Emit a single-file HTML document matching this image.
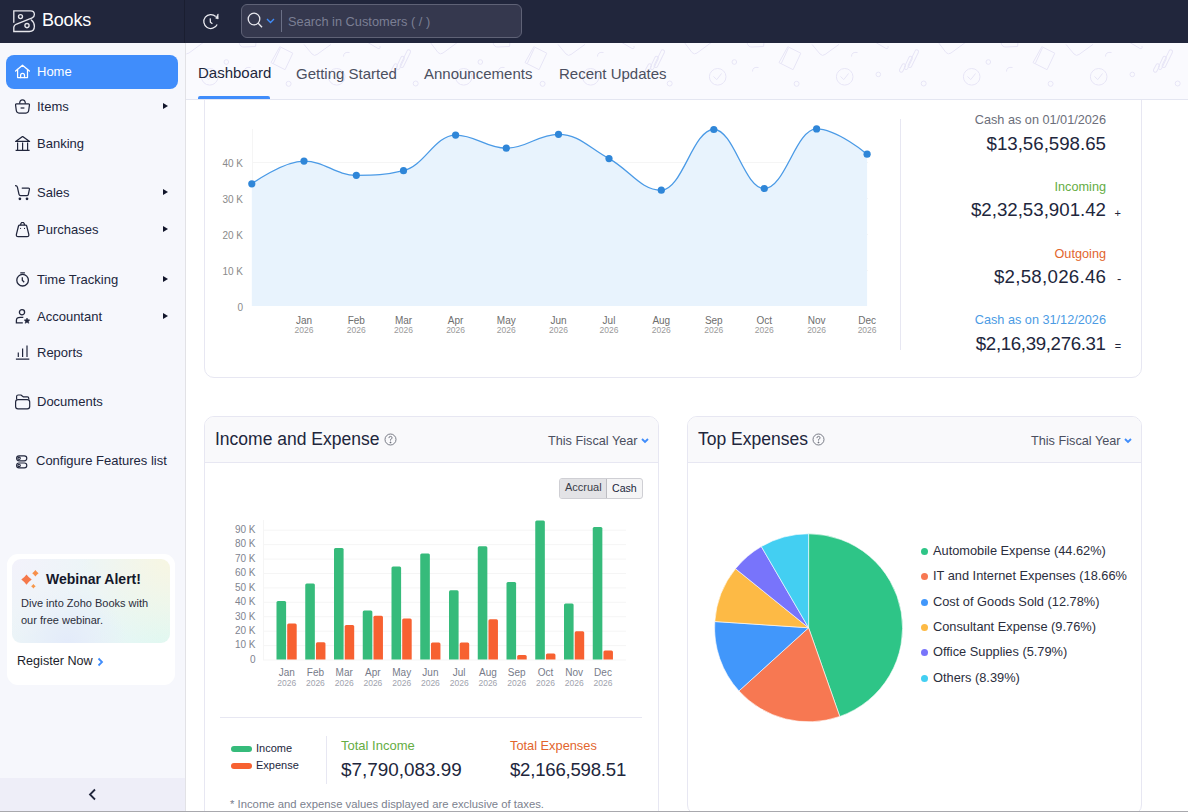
<!DOCTYPE html>
<html><head><meta charset="utf-8">
<style>
*{box-sizing:border-box;margin:0;padding:0}
html,body{width:1188px;height:812px;overflow:hidden;background:#fff;font-family:"Liberation Sans",sans-serif;color:#21263c}
.abs{position:absolute}
#top{position:absolute;left:0;top:0;width:1188px;height:43px;background:#21263c}
#logoarea{position:absolute;left:0;top:0;width:185px;height:43px;background:#21263c;border-right:1px solid #1a1e30}
#side{position:absolute;left:0;top:43px;width:186px;height:768px;background:#f6f7fc;border-right:1px solid #e2e2e6}
.nav{position:absolute;left:6px;width:172px;height:34px;font-size:13px;color:#21263c;line-height:34px}
.nav .t{position:absolute;left:31px;top:0}
.nav svg{position:absolute;left:9px;top:9px}
.nav .arr{position:absolute;left:157px;top:13.3px;width:0;height:0;border-left:5.2px solid #11152a;border-top:3.6px solid transparent;border-bottom:3.6px solid transparent}
#tabs{position:absolute;left:186px;top:43px;width:1002px;height:57px;background:#fafafe;border-bottom:1px solid #e4e6f1}
.tab{position:absolute;top:22px;font-size:15px;color:#4b4f60}
#main{position:absolute;left:186px;top:100px;width:1002px;height:710px;background:#fff}
.card{position:absolute;border:1px solid #e7e7f2;border-radius:8px;background:#fff;overflow:hidden}
.chead{position:absolute;left:0;top:0;right:0;height:46px;background:#f9f9fb;border-bottom:1px solid #e7e7f2}
.rt{right:82px;font-size:12.7px;white-space:nowrap}
.rv{right:82px;font-size:18.7px;color:#21263c;white-space:nowrap}
.ctitle{font-size:17.5px;color:#21263c;white-space:nowrap}
.fy{font-size:12.7px;color:#4b4f60;white-space:nowrap;margin-top:1px}
.leg{position:absolute;left:18px;font-size:12.8px;color:#2b2e3d;white-space:nowrap;height:20px;line-height:20px}
.leg i{position:absolute;left:-12px;top:7px;width:7px;height:7px;border-radius:50%}
</style></head>
<body>
<div id="top">
  <div id="logoarea">
    <svg class="abs" style="left:13px;top:10px" width="23" height="23" viewBox="0 0 23 23" fill="none" stroke="#e6e6ec" stroke-width="1.35" stroke-linecap="round"><path d="M0.8 12.3 V0.8 H17.5 Q21.4 0.8 21.4 4.6 Q21.4 6.9 19.2 7.8 L3.6 14 Q0.8 15.2 0.8 17.6 V21.5 H16.3 Q21.4 21.5 21.4 16.2 Q21.4 12.3 18.3 10"/><circle cx="7.5" cy="6.6" r="2"/><circle cx="14" cy="15.6" r="2.1"/></svg>
    <div class="abs" style="left:42px;top:10px;font-size:18px;color:#fff;font-weight:normal;letter-spacing:-0.2px">Books</div>
  </div>
  <svg class="abs" style="left:198px;top:8px" width="26" height="26" viewBox="0 0 26 26" fill="none" stroke="#ececf2" stroke-width="1.25"><path d="M17.75 8.55 A7 7 0 1 0 19.15 16.46"/><path d="M17.6 10.2 L20.1 5.9 L20.2 10.9 Z" fill="#ececf2" stroke-width="0.6" stroke-linejoin="round"/><path d="M12.2 10.4 L12.4 14.2 L14.4 15.8"/></svg>
  <div class="abs" style="left:241px;top:4px;width:281px;height:34px;background:#35384e;border:1px solid #5f6276;border-radius:6px"></div>
  <svg class="abs" style="left:247px;top:12px" width="16" height="17" viewBox="0 0 16 17" fill="none" stroke="#e8e8ee" stroke-width="1.3"><circle cx="7" cy="7" r="5.8"/><path d="M11.2 11.2 L15 15.3"/></svg>
  <svg class="abs" style="left:266px;top:18px" width="9" height="6" viewBox="0 0 9 6" fill="none" stroke="#408dfb" stroke-width="1.4"><path d="M1 1 L4.5 4.5 L8 1"/></svg>
  <div class="abs" style="left:281px;top:10px;width:1px;height:22px;background:#6b7086"></div>
  <div class="abs" style="left:288px;top:13.5px;font-size:12.8px;color:#7b7f94;white-space:nowrap">Search in Customers ( / )</div>
</div>
<div id="side">
  <div class="nav" style="top:12px;background:#408dfb;border-radius:8px;color:#fff">
    <svg width="16" height="16" viewBox="0 0 16 16" fill="none" stroke="#fff" stroke-width="1.25" stroke-linejoin="round" stroke-linecap="round"><path d="M0.6 7 L7.5 1.2 L14.4 7"/><path d="M2.6 5.4 V13.6 H12.5 V5.4"/><path d="M5.6 13.6 V11.4 Q5.6 9.4 7.55 9.4 Q9.5 9.4 9.5 11.4 V13.6"/></svg>
    <span class="t">Home</span>
  </div>
  <div class="nav" style="top:47px">
    <svg width="16" height="16" viewBox="0 0 16 16" fill="none" stroke="#21263c" stroke-width="1.25" stroke-linejoin="round"><path d="M4.6 4.6 Q4.8 0.9 7.5 0.9 Q10.2 0.9 10.4 4.6"/><path d="M1.6 4.8 H13.4 Q14.6 4.8 14.4 6.3 L13.7 11.5 Q13.3 14 11 14 H4 Q1.7 14 1.3 11.5 L0.6 6.3 Q0.4 4.8 1.6 4.8 Z"/><path d="M5.6 9 H9.4"/></svg>
    <span class="t">Items</span><span class="arr"></span>
  </div>
  <div class="nav" style="top:84px">
    <svg width="16" height="16" viewBox="0 0 16 16" fill="none" stroke="#21263c" stroke-width="1.2" stroke-linejoin="round"><path d="M0.6 5.4 L7.6 0.4 L14.6 5.4 Z"/><path d="M2.6 6.4 V13.8 M7.6 6.4 V13.8 M12.6 6.4 V13.8 M0.6 14.3 H14.6"/></svg>
    <span class="t">Banking</span>
  </div>
  <div class="nav" style="top:133px">
    <svg width="16" height="16" viewBox="0 0 16 16" fill="none" stroke="#21263c" stroke-width="1.25" stroke-linejoin="round" stroke-linecap="round"><path d="M0.4 0.7 Q2 0.7 2.4 2.2 L4 9.3 Q4.3 10.6 5.6 10.6 H12.2 Q13.1 10.6 13.3 9.7 L14.4 4.4 Q14.6 3.1 13.3 3.1 H7.2"/><circle cx="4.9" cy="13.8" r="0.75" fill="#21263c"/><circle cx="12" cy="13.8" r="0.75" fill="#21263c"/></svg>
    <span class="t">Sales</span><span class="arr"></span>
  </div>
  <div class="nav" style="top:170px">
    <svg width="16" height="16" viewBox="0 0 16 16" fill="none" stroke="#21263c" stroke-width="1.25" stroke-linejoin="round"><path d="M5.6 3.2 Q5.6 0.4 7.55 0.4 Q9.5 0.4 9.5 3.2"/><path d="M4.6 3.2 H10.6 Q11.4 3.2 11.7 4 L13.8 12.3 Q14.2 14.6 12 14.6 H3.2 Q1 14.6 1.4 12.3 L3.5 4 Q3.8 3.2 4.6 3.2 Z"/><circle cx="5.6" cy="6.4" r="0.55" fill="#21263c" stroke="none"/><circle cx="9.5" cy="6.4" r="0.55" fill="#21263c" stroke="none"/></svg>
    <span class="t">Purchases</span><span class="arr"></span>
  </div>
  <div class="nav" style="top:220px">
    <svg width="16" height="16" viewBox="0 0 16 16" fill="none" stroke="#21263c" stroke-width="1.3"><circle cx="7.6" cy="8.2" r="5.8"/><path d="M5.3 0.9 H9.9 M7.3 5.3 V8.3 L9.2 10.2"/></svg>
    <span class="t">Time Tracking</span><span class="arr"></span>
  </div>
  <div class="nav" style="top:257px">
    <svg width="16" height="16" viewBox="0 0 16 16" fill="none" stroke="#21263c" stroke-width="1.3"><circle cx="7" cy="3.3" r="2.6"/><path d="M8.3 8.3 H5.3 Q1.4 8.3 1.4 11.5 V13.8 H7.8"/><path d="M12 9 L12.9 10.8 L14.8 11 L13.4 12.3 L13.8 14.3 L12 13.3 L10.2 14.3 L10.6 12.3 L9.2 11 L11.1 10.8 Z" fill="#21263c" stroke-width="0.6"/></svg>
    <span class="t">Accountant</span><span class="arr"></span>
  </div>
  <div class="nav" style="top:293px">
    <svg width="16" height="16" viewBox="0 0 16 16" fill="none" stroke="#21263c" stroke-width="1.3"><path d="M0.9 14.1 H14.3 M3.3 7.6 V11.9 M7.6 3.5 V11.9 M12 0.4 V11.9" stroke-width="1.2"/></svg>
    <span class="t">Reports</span>
  </div>
  <div class="nav" style="top:342px">
    <svg width="16" height="16" viewBox="0 0 16 16" fill="none" stroke="#21263c" stroke-width="1.2" stroke-linejoin="round"><path d="M1.6 5.6 V2.6 Q1.6 1 3.2 1 H5.9 L8.2 2.8 H12.3 Q13.8 2.8 13.8 4.4 V5.6"/><rect x="0.6" y="5.6" width="14.1" height="9.2" rx="2.4"/></svg>
    <span class="t">Documents</span>
  </div>
  <div class="nav" style="top:401px">
    <svg width="16" height="16" viewBox="0 0 16 16" fill="none" stroke="#21263c" stroke-width="1.15"><rect x="1.6" y="2.8" width="10.2" height="5" rx="2.5"/><rect x="1.6" y="10" width="10.2" height="4.8" rx="2.4"/><circle cx="4.1" cy="5.3" r="1.2"/><circle cx="4.1" cy="12.4" r="1.2"/></svg>
    <span class="t" style="left:30px">Configure Features list</span>
  </div>
  <div class="abs" style="left:7px;top:511px;width:168px;height:131px;background:#fff;border-radius:11px">
    <div class="abs" style="left:5px;top:5px;width:158px;height:84px;border-radius:9px;background:radial-gradient(circle at 0% 0%,#f3f2fb 0,rgba(243,242,251,0) 45%),radial-gradient(circle at 100% 0%,#f7f6e2 0,rgba(247,246,226,0) 50%),radial-gradient(circle at 35% 100%,#e3ebfa 0,rgba(227,235,250,0) 45%),radial-gradient(circle at 95% 95%,#e0f8f2 0,rgba(224,248,242,0) 45%),#ecf5f7"></div>
    <svg class="abs" style="left:0;top:0" width="40" height="40" viewBox="0 0 40 40"><path d="M19.5 20.400000000000002 Q21.684 23.416 24.7 25.6 Q21.684 27.784000000000002 19.5 30.8 Q17.316 27.784000000000002 14.3 25.6 Q17.316 23.416 19.5 20.400000000000002Z" fill="#f5784a"/><path d="M28.4 16.0 Q29.744 17.855999999999998 31.599999999999998 19.2 Q29.744 20.544 28.4 22.4 Q27.055999999999997 20.544 25.2 19.2 Q27.055999999999997 17.855999999999998 28.4 16.0Z" fill="#f78f4a"/><path d="M26.4 29.999999999999996 Q27.366 31.333999999999996 28.7 32.3 Q27.366 33.266 26.4 34.599999999999994 Q25.433999999999997 33.266 24.099999999999998 32.3 Q25.433999999999997 31.333999999999996 26.4 29.999999999999996Z" fill="#f7974a"/></svg>
    <div class="abs" style="left:39px;top:17px;font-size:14px;font-weight:bold;color:#15182a;white-space:nowrap">Webinar Alert!</div>
    <div class="abs" style="left:14px;top:41px;font-size:11px;line-height:17px;color:#2a2d3a;white-space:nowrap">Dive into Zoho Books with<br>our free webinar.</div>
    <div class="abs" style="left:10px;top:99.5px;font-size:12.6px;color:#1a1d2b;white-space:nowrap">Register Now</div>
    <svg class="abs" style="left:90px;top:103px" width="7" height="10" viewBox="0 0 7 10" fill="none" stroke="#408dfb" stroke-width="1.8"><path d="M1.5 1.5 L5 5 L1.5 8.5"/></svg>
  </div>
  <div class="abs" style="left:0;top:735px;width:185px;height:33px;background:#eeeef8"></div>
  <svg class="abs" style="left:88px;top:745px" width="9" height="13" viewBox="0 0 9 13" fill="none" stroke="#21263c" stroke-width="1.8"><path d="M7 1.5 L2 6.5 L7 11.5"/></svg>
</div>
<div id="tabs"><svg class="abs" style="left:0;top:0" width="1002" height="56"><defs><pattern id="doodle" x="6" y="-1" width="254" height="57" patternUnits="userSpaceOnUse"><g fill="none" stroke="#e7e5f6" stroke-width="1">
<circle cx="17.7" cy="34.8" r="8.3"/><path d="M13.5 34.5 L16.8 37.6 L21.5 31.5"/>
<circle cx="144.7" cy="34.8" r="8.3"/><path d="M140.5 34.5 L143.8 37.6 L148.5 31.5"/>
<circle cx="34.3" cy="20" r="2.3"/><path d="M52.5 29.5 Q52.5 24.5 58.5 25.5"/>
<path d="M87.8 4.7 L100.8 11.2 L93.1 27.7 L79 20.6 Z M88.4 6 L81.3 21.5"/>
<circle cx="96.6" cy="41.8" r="2.5"/>
<path d="M112 2.4 L120 12 Q122.5 14.5 125 12.5 L139 2.4"/>
<path d="M151.5 14.5 Q151.5 9.5 157.5 10.5"/>
<circle cx="178.3" cy="32.4" r="2.3"/>
<rect x="-1.8" y="-4.5" width="3.6" height="9" rx="1.8" transform="translate(202.5 26) rotate(28)"/>
<rect x="-1.8" y="-7" width="3.6" height="14" rx="1.8" transform="translate(208.3 20.9) rotate(25)"/>
<rect x="-1.8" y="-9.6" width="3.6" height="19.2" rx="1.8" transform="translate(213.3 16.7) rotate(26)"/>
<circle cx="223.7" cy="41.5" r="2.5"/>
<path d="M238 0 L246 10.5 Q248.5 13 251 11 L266 0"/><path d="M-16 0 L-8 10.5 Q-5.5 13 -3 11 L12 0"/>
<path d="M47 0.5 Q48 5.3 52 5 L63.6 4.5 L64 0"/>
<path d="M175 0 L186 6.5 Q188.5 7.5 188 4"/>
</g></pattern></defs><rect width="1002" height="56" fill="url(#doodle)"/></svg>

  <div class="tab" style="left:12px;top:21px;color:#21263c">Dashboard</div>
  <div class="tab" style="left:110px">Getting Started</div>
  <div class="tab" style="left:238px">Announcements</div>
  <div class="tab" style="left:373px">Recent Updates</div>
  <div class="abs" style="left:12px;top:53px;width:72px;height:3px;background:#408dfb;border-radius:2px 2px 0 0"></div>
</div>
<div id="main"></div>
<div class="abs" style="left:186px;top:100px;width:1002px;height:712px;overflow:hidden">
  <div class="abs" style="left:18px;top:-40px;width:938px;height:318px;border:1px solid #e7e7f2;border-radius:10px;background:#fff"></div>
  <div class="abs" style="left:714px;top:19px;width:1px;height:231px;background:#e7e7f2"></div>
  <div class="abs" style="left:18px;top:316px;width:455px;height:420px;border:1px solid #e7e7f2;border-radius:10px;background:#fff;overflow:hidden">
    <div class="chead"></div>
  </div>
  <div class="abs" style="left:501px;top:316px;width:455px;height:399px;border:1px solid #e7e7f2;border-radius:10px;background:#fff;overflow:hidden">
    <div class="chead"></div>
  </div>
</div>
<svg class="abs" style="left:0;top:0" width="1188" height="812" viewBox="0 0 1188 812">
<line x1="252" y1="162.5" x2="868" y2="162.5" stroke="#f5f5f5" stroke-width="1"/>
<line x1="252" y1="198.5" x2="868" y2="198.5" stroke="#f5f5f5" stroke-width="1"/>
<line x1="252" y1="234.5" x2="868" y2="234.5" stroke="#f5f5f5" stroke-width="1"/>
<line x1="252" y1="270.5" x2="868" y2="270.5" stroke="#f5f5f5" stroke-width="1"/>
<line x1="252.5" y1="129" x2="252.5" y2="306" stroke="#f5f5f5" stroke-width="1"/>
<path d="M251.80 183.80 C251.80 183.80 283.12 161.10 304.00 161.10 C324.92 161.10 335.38 175.30 356.30 175.30 C375.18 175.30 384.62 175.30 403.50 170.70 C424.34 166.10 434.76 135.10 455.60 135.10 C475.88 135.10 486.02 148.20 506.30 148.20 C527.18 148.20 537.62 134.30 558.50 134.30 C578.70 134.30 588.80 147.62 609.00 158.60 C629.92 169.98 640.38 190.20 661.30 190.20 C682.30 190.20 692.80 129.50 713.80 129.50 C734.00 129.50 744.10 188.50 764.30 188.50 C785.22 188.50 795.68 128.90 816.60 128.90 C836.80 128.90 867.10 154.20 867.10 154.20 L867.10 306 L251.80 306 Z" fill="#e8f3fd"/>
<path d="M251.80 183.80 C251.80 183.80 283.12 161.10 304.00 161.10 C324.92 161.10 335.38 175.30 356.30 175.30 C375.18 175.30 384.62 175.30 403.50 170.70 C424.34 166.10 434.76 135.10 455.60 135.10 C475.88 135.10 486.02 148.20 506.30 148.20 C527.18 148.20 537.62 134.30 558.50 134.30 C578.70 134.30 588.80 147.62 609.00 158.60 C629.92 169.98 640.38 190.20 661.30 190.20 C682.30 190.20 692.80 129.50 713.80 129.50 C734.00 129.50 744.10 188.50 764.30 188.50 C785.22 188.50 795.68 128.90 816.60 128.90 C836.80 128.90 867.10 154.20 867.10 154.20" fill="none" stroke="#4a9ae6" stroke-width="1.3"/>
<circle cx="251.8" cy="183.8" r="3.6" fill="#2f86d8"/>
<circle cx="304.0" cy="161.1" r="3.6" fill="#2f86d8"/>
<circle cx="356.3" cy="175.3" r="3.6" fill="#2f86d8"/>
<circle cx="403.5" cy="170.7" r="3.6" fill="#2f86d8"/>
<circle cx="455.6" cy="135.1" r="3.6" fill="#2f86d8"/>
<circle cx="506.3" cy="148.2" r="3.6" fill="#2f86d8"/>
<circle cx="558.5" cy="134.3" r="3.6" fill="#2f86d8"/>
<circle cx="609.0" cy="158.6" r="3.6" fill="#2f86d8"/>
<circle cx="661.3" cy="190.2" r="3.6" fill="#2f86d8"/>
<circle cx="713.8" cy="129.5" r="3.6" fill="#2f86d8"/>
<circle cx="764.3" cy="188.5" r="3.6" fill="#2f86d8"/>
<circle cx="816.6" cy="128.9" r="3.6" fill="#2f86d8"/>
<circle cx="867.1" cy="154.2" r="3.6" fill="#2f86d8"/>
<text x="243" y="166.6" text-anchor="end" font-size="10" fill="#8a8a8a">40 K</text>
<text x="243" y="202.6" text-anchor="end" font-size="10" fill="#8a8a8a">30 K</text>
<text x="243" y="238.6" text-anchor="end" font-size="10" fill="#8a8a8a">20 K</text>
<text x="243" y="274.6" text-anchor="end" font-size="10" fill="#8a8a8a">10 K</text>
<text x="243" y="310.6" text-anchor="end" font-size="10" fill="#8a8a8a">0</text>
<text x="304.0" y="323.5" text-anchor="middle" font-size="10" fill="#6e6e6e">Jan</text>
<text x="304.0" y="333" text-anchor="middle" font-size="8.5" fill="#9a9a9a">2026</text>
<text x="356.3" y="323.5" text-anchor="middle" font-size="10" fill="#6e6e6e">Feb</text>
<text x="356.3" y="333" text-anchor="middle" font-size="8.5" fill="#9a9a9a">2026</text>
<text x="403.5" y="323.5" text-anchor="middle" font-size="10" fill="#6e6e6e">Mar</text>
<text x="403.5" y="333" text-anchor="middle" font-size="8.5" fill="#9a9a9a">2026</text>
<text x="455.6" y="323.5" text-anchor="middle" font-size="10" fill="#6e6e6e">Apr</text>
<text x="455.6" y="333" text-anchor="middle" font-size="8.5" fill="#9a9a9a">2026</text>
<text x="506.3" y="323.5" text-anchor="middle" font-size="10" fill="#6e6e6e">May</text>
<text x="506.3" y="333" text-anchor="middle" font-size="8.5" fill="#9a9a9a">2026</text>
<text x="558.5" y="323.5" text-anchor="middle" font-size="10" fill="#6e6e6e">Jun</text>
<text x="558.5" y="333" text-anchor="middle" font-size="8.5" fill="#9a9a9a">2026</text>
<text x="609.0" y="323.5" text-anchor="middle" font-size="10" fill="#6e6e6e">Jul</text>
<text x="609.0" y="333" text-anchor="middle" font-size="8.5" fill="#9a9a9a">2026</text>
<text x="661.3" y="323.5" text-anchor="middle" font-size="10" fill="#6e6e6e">Aug</text>
<text x="661.3" y="333" text-anchor="middle" font-size="8.5" fill="#9a9a9a">2026</text>
<text x="713.8" y="323.5" text-anchor="middle" font-size="10" fill="#6e6e6e">Sep</text>
<text x="713.8" y="333" text-anchor="middle" font-size="8.5" fill="#9a9a9a">2026</text>
<text x="764.3" y="323.5" text-anchor="middle" font-size="10" fill="#6e6e6e">Oct</text>
<text x="764.3" y="333" text-anchor="middle" font-size="8.5" fill="#9a9a9a">2026</text>
<text x="816.6" y="323.5" text-anchor="middle" font-size="10" fill="#6e6e6e">Nov</text>
<text x="816.6" y="333" text-anchor="middle" font-size="8.5" fill="#9a9a9a">2026</text>
<text x="867.1" y="323.5" text-anchor="middle" font-size="10" fill="#6e6e6e">Dec</text>
<text x="867.1" y="333" text-anchor="middle" font-size="8.5" fill="#9a9a9a">2026</text>
<line x1="263" y1="660.0" x2="626" y2="660.0" stroke="#f5f5f5" stroke-width="1"/>
<text x="255.5" y="662.8" text-anchor="end" font-size="10" fill="#80848f">0</text>
<line x1="263" y1="645.6" x2="626" y2="645.6" stroke="#f5f5f5" stroke-width="1"/>
<text x="255.5" y="648.4" text-anchor="end" font-size="10" fill="#80848f">10 K</text>
<line x1="263" y1="631.2" x2="626" y2="631.2" stroke="#f5f5f5" stroke-width="1"/>
<text x="255.5" y="634.0" text-anchor="end" font-size="10" fill="#80848f">20 K</text>
<line x1="263" y1="616.7" x2="626" y2="616.7" stroke="#f5f5f5" stroke-width="1"/>
<text x="255.5" y="619.5" text-anchor="end" font-size="10" fill="#80848f">30 K</text>
<line x1="263" y1="602.3" x2="626" y2="602.3" stroke="#f5f5f5" stroke-width="1"/>
<text x="255.5" y="605.1" text-anchor="end" font-size="10" fill="#80848f">40 K</text>
<line x1="263" y1="587.9" x2="626" y2="587.9" stroke="#f5f5f5" stroke-width="1"/>
<text x="255.5" y="590.7" text-anchor="end" font-size="10" fill="#80848f">50 K</text>
<line x1="263" y1="573.5" x2="626" y2="573.5" stroke="#f5f5f5" stroke-width="1"/>
<text x="255.5" y="576.3" text-anchor="end" font-size="10" fill="#80848f">60 K</text>
<line x1="263" y1="559.1" x2="626" y2="559.1" stroke="#f5f5f5" stroke-width="1"/>
<text x="255.5" y="561.9" text-anchor="end" font-size="10" fill="#80848f">70 K</text>
<line x1="263" y1="544.6" x2="626" y2="544.6" stroke="#f5f5f5" stroke-width="1"/>
<text x="255.5" y="547.4" text-anchor="end" font-size="10" fill="#80848f">80 K</text>
<line x1="263" y1="530.2" x2="626" y2="530.2" stroke="#f5f5f5" stroke-width="1"/>
<text x="255.5" y="533.0" text-anchor="end" font-size="10" fill="#80848f">90 K</text>
<line x1="263.5" y1="520" x2="263.5" y2="660" stroke="#f5f5f5" stroke-width="1"/>
<path d="M276.50 659.5 V602.40 Q276.50 600.90 278.00 600.90 H284.60 Q286.10 600.90 286.10 602.40 V659.5 Z" fill="#36bb7b"/>
<path d="M287.20 659.5 V625.00 Q287.20 623.50 288.70 623.50 H295.20 Q296.70 623.50 296.70 625.00 V659.5 Z" fill="#f76131"/>
<text x="286.7" y="676" text-anchor="middle" font-size="10" fill="#777b89">Jan</text>
<text x="286.7" y="685.7" text-anchor="middle" font-size="8.5" fill="#a0a3ae">2026</text>
<path d="M305.25 659.5 V585.10 Q305.25 583.60 306.75 583.60 H313.35 Q314.85 583.60 314.85 585.10 V659.5 Z" fill="#36bb7b"/>
<path d="M315.95 659.5 V643.70 Q315.95 642.20 317.45 642.20 H323.95 Q325.45 642.20 325.45 643.70 V659.5 Z" fill="#f76131"/>
<text x="315.4" y="676" text-anchor="middle" font-size="10" fill="#777b89">Feb</text>
<text x="315.4" y="685.7" text-anchor="middle" font-size="8.5" fill="#a0a3ae">2026</text>
<path d="M334.00 659.5 V549.60 Q334.00 548.10 335.50 548.10 H342.10 Q343.60 548.10 343.60 549.60 V659.5 Z" fill="#36bb7b"/>
<path d="M344.70 659.5 V626.40 Q344.70 624.90 346.20 624.90 H352.70 Q354.20 624.90 354.20 626.40 V659.5 Z" fill="#f76131"/>
<text x="344.2" y="676" text-anchor="middle" font-size="10" fill="#777b89">Mar</text>
<text x="344.2" y="685.7" text-anchor="middle" font-size="8.5" fill="#a0a3ae">2026</text>
<path d="M362.75 659.5 V611.90 Q362.75 610.40 364.25 610.40 H370.85 Q372.35 610.40 372.35 611.90 V659.5 Z" fill="#36bb7b"/>
<path d="M373.45 659.5 V617.30 Q373.45 615.80 374.95 615.80 H381.45 Q382.95 615.80 382.95 617.30 V659.5 Z" fill="#f76131"/>
<text x="372.9" y="676" text-anchor="middle" font-size="10" fill="#777b89">Apr</text>
<text x="372.9" y="685.7" text-anchor="middle" font-size="8.5" fill="#a0a3ae">2026</text>
<path d="M391.50 659.5 V568.00 Q391.50 566.50 393.00 566.50 H399.60 Q401.10 566.50 401.10 568.00 V659.5 Z" fill="#36bb7b"/>
<path d="M402.20 659.5 V619.90 Q402.20 618.40 403.70 618.40 H410.20 Q411.70 618.40 411.70 619.90 V659.5 Z" fill="#f76131"/>
<text x="401.7" y="676" text-anchor="middle" font-size="10" fill="#777b89">May</text>
<text x="401.7" y="685.7" text-anchor="middle" font-size="8.5" fill="#a0a3ae">2026</text>
<path d="M420.25 659.5 V555.00 Q420.25 553.50 421.75 553.50 H428.35 Q429.85 553.50 429.85 555.00 V659.5 Z" fill="#36bb7b"/>
<path d="M430.95 659.5 V644.10 Q430.95 642.60 432.45 642.60 H438.95 Q440.45 642.60 440.45 644.10 V659.5 Z" fill="#f76131"/>
<text x="430.4" y="676" text-anchor="middle" font-size="10" fill="#777b89">Jun</text>
<text x="430.4" y="685.7" text-anchor="middle" font-size="8.5" fill="#a0a3ae">2026</text>
<path d="M449.00 659.5 V591.80 Q449.00 590.30 450.50 590.30 H457.10 Q458.60 590.30 458.60 591.80 V659.5 Z" fill="#36bb7b"/>
<path d="M459.70 659.5 V644.00 Q459.70 642.50 461.20 642.50 H467.70 Q469.20 642.50 469.20 644.00 V659.5 Z" fill="#f76131"/>
<text x="459.2" y="676" text-anchor="middle" font-size="10" fill="#777b89">Jul</text>
<text x="459.2" y="685.7" text-anchor="middle" font-size="8.5" fill="#a0a3ae">2026</text>
<path d="M477.75 659.5 V547.80 Q477.75 546.30 479.25 546.30 H485.85 Q487.35 546.30 487.35 547.80 V659.5 Z" fill="#36bb7b"/>
<path d="M488.45 659.5 V620.80 Q488.45 619.30 489.95 619.30 H496.45 Q497.95 619.30 497.95 620.80 V659.5 Z" fill="#f76131"/>
<text x="487.9" y="676" text-anchor="middle" font-size="10" fill="#777b89">Aug</text>
<text x="487.9" y="685.7" text-anchor="middle" font-size="8.5" fill="#a0a3ae">2026</text>
<path d="M506.50 659.5 V583.60 Q506.50 582.10 508.00 582.10 H514.60 Q516.10 582.10 516.10 583.60 V659.5 Z" fill="#36bb7b"/>
<path d="M517.20 659.5 V656.40 Q517.20 654.90 518.70 654.90 H525.20 Q526.70 654.90 526.70 656.40 V659.5 Z" fill="#f76131"/>
<text x="516.7" y="676" text-anchor="middle" font-size="10" fill="#777b89">Sep</text>
<text x="516.7" y="685.7" text-anchor="middle" font-size="8.5" fill="#a0a3ae">2026</text>
<path d="M535.25 659.5 V522.10 Q535.25 520.60 536.75 520.60 H543.35 Q544.85 520.60 544.85 522.10 V659.5 Z" fill="#36bb7b"/>
<path d="M545.95 659.5 V655.00 Q545.95 653.50 547.45 653.50 H553.95 Q555.45 653.50 555.45 655.00 V659.5 Z" fill="#f76131"/>
<text x="545.5" y="676" text-anchor="middle" font-size="10" fill="#777b89">Oct</text>
<text x="545.5" y="685.7" text-anchor="middle" font-size="8.5" fill="#a0a3ae">2026</text>
<path d="M564.00 659.5 V605.10 Q564.00 603.60 565.50 603.60 H572.10 Q573.60 603.60 573.60 605.10 V659.5 Z" fill="#36bb7b"/>
<path d="M574.70 659.5 V632.80 Q574.70 631.30 576.20 631.30 H582.70 Q584.20 631.30 584.20 632.80 V659.5 Z" fill="#f76131"/>
<text x="574.2" y="676" text-anchor="middle" font-size="10" fill="#777b89">Nov</text>
<text x="574.2" y="685.7" text-anchor="middle" font-size="8.5" fill="#a0a3ae">2026</text>
<path d="M592.75 659.5 V528.40 Q592.75 526.90 594.25 526.90 H600.85 Q602.35 526.90 602.35 528.40 V659.5 Z" fill="#36bb7b"/>
<path d="M603.45 659.5 V651.90 Q603.45 650.40 604.95 650.40 H611.45 Q612.95 650.40 612.95 651.90 V659.5 Z" fill="#f76131"/>
<text x="603.0" y="676" text-anchor="middle" font-size="10" fill="#777b89">Dec</text>
<text x="603.0" y="685.7" text-anchor="middle" font-size="8.5" fill="#a0a3ae">2026</text>
<path d="M808.6 627.8 L808.60 533.80 A94 94 0 0 1 839.77 716.48 Z" fill="#2ec587" stroke="#fff" stroke-width="0.6" stroke-linejoin="round"/>
<path d="M808.6 627.8 L839.77 716.48 A94 94 0 0 1 738.96 690.93 Z" fill="#f77852" stroke="#fff" stroke-width="0.6" stroke-linejoin="round"/>
<path d="M808.6 627.8 L738.96 690.93 A94 94 0 0 1 714.81 621.54 Z" fill="#4197fb" stroke="#fff" stroke-width="0.6" stroke-linejoin="round"/>
<path d="M808.6 627.8 L714.81 621.54 A94 94 0 0 1 735.50 568.71 Z" fill="#fdba45" stroke="#fff" stroke-width="0.6" stroke-linejoin="round"/>
<path d="M808.6 627.8 L735.50 568.71 A94 94 0 0 1 761.31 546.56 Z" fill="#7874fb" stroke="#fff" stroke-width="0.6" stroke-linejoin="round"/>
<path d="M808.6 627.8 L761.31 546.56 A94 94 0 0 1 808.60 533.80 Z" fill="#43cff2" stroke="#fff" stroke-width="0.6" stroke-linejoin="round"/>
</svg>
<div class="abs rt" style="top:113px;color:#6b6e7a">Cash as on 01/01/2026</div>
<div class="abs rv" style="top:132.7px">$13,56,598.65</div>
<div class="abs rt" style="top:180px;color:#65ad43">Incoming</div>
<div class="abs rv" style="top:199px">$2,32,53,901.42</div>
<div class="abs" style="left:1114.5px;top:206.5px;font-size:11px;color:#21263c">+</div>
<div class="abs rt" style="top:247px;color:#e2652d">Outgoing</div>
<div class="abs rv" style="top:265.5px;letter-spacing:0.27px;margin-right:-0.27px">$2,58,026.46</div>
<div class="abs" style="left:1117px;top:270.5px;font-size:13px;color:#21263c">-</div>
<div class="abs rt" style="top:313px;color:#4b9be4">Cash as on 31/12/2026</div>
<div class="abs rv" style="top:333px;letter-spacing:-0.35px;margin-right:0.35px">$2,16,39,276.31</div>
<div class="abs" style="left:1114.7px;top:339.5px;font-size:11px;color:#21263c">=</div>

<div class="abs ctitle" style="left:215px;top:429px">Income and Expense</div>
<svg class="abs" style="left:384px;top:433px" width="13" height="13" viewBox="0 0 13 13" fill="none" stroke="#6a6d78" stroke-width="0.9"><circle cx="6.5" cy="6.5" r="5.5"/><path d="M4.9 5.1 Q4.9 3.4 6.5 3.4 Q8.1 3.4 8.1 4.9 Q8.1 5.9 6.5 6.5 V7.6"/><circle cx="6.5" cy="9.4" r="0.5" fill="#6a6d78"/></svg>
<div class="abs fy" style="left:548px;top:433px">This Fiscal Year</div>
<svg class="abs" style="left:640.5px;top:437.5px" width="9" height="6" viewBox="0 0 9 6" fill="none" stroke="#408dfb" stroke-width="1.9"><path d="M1 1 L4 4 L7 1"/></svg>
<div class="abs" style="left:559px;top:478px;width:84px;height:21px;border:1px solid #cfcfd4;border-radius:3px;background:#f5f5f6;overflow:hidden">
  <div class="abs" style="left:0;top:0;width:47px;height:19px;background:#e3e3e6;border-right:1px solid #bdbdc2"></div>
  <div class="abs" style="left:5px;top:2.3px;font-size:11px;color:#3a3d48">Accrual</div>
  <div class="abs" style="left:52px;top:2.5px;font-size:10.6px;color:#21263c">Cash</div>
</div>
<div class="abs" style="left:220px;top:717px;width:422px;height:1px;background:#e7e7f2"></div>
<div class="abs" style="left:231px;top:746px;width:21px;height:6px;border-radius:3px;background:#36bb7b"></div>
<div class="abs" style="left:256px;top:742px;font-size:11px;color:#21263c">Income</div>
<div class="abs" style="left:231px;top:763px;width:21px;height:6px;border-radius:3px;background:#f76131"></div>
<div class="abs" style="left:256px;top:759px;font-size:11px;color:#21263c">Expense</div>
<div class="abs" style="left:326px;top:736px;width:1px;height:48px;background:#e7e7f2"></div>
<div class="abs" style="left:341px;top:738px;font-size:13px;color:#65ad43">Total Income</div>
<div class="abs" style="left:341px;top:758.8px;font-size:18.9px;color:#21263c">$7,790,083.99</div>
<div class="abs" style="left:510px;top:738px;font-size:12.8px;color:#e2652d">Total Expenses</div>
<div class="abs" style="left:510px;top:759px;font-size:18.6px;color:#21263c;letter-spacing:-0.22px">$2,166,598.51</div>
<div class="abs" style="left:230px;top:798px;font-size:11.3px;color:#7b7f8e;white-space:nowrap">* Income and expense values displayed are exclusive of taxes.</div>

<div class="abs ctitle" style="left:698px;top:429px">Top Expenses</div>
<svg class="abs" style="left:812px;top:433px" width="13" height="13" viewBox="0 0 13 13" fill="none" stroke="#6a6d78" stroke-width="0.9"><circle cx="6.5" cy="6.5" r="5.5"/><path d="M4.9 5.1 Q4.9 3.4 6.5 3.4 Q8.1 3.4 8.1 4.9 Q8.1 5.9 6.5 6.5 V7.6"/><circle cx="6.5" cy="9.4" r="0.5" fill="#6a6d78"/></svg>
<div class="abs fy" style="left:1031px;top:433px">This Fiscal Year</div>
<svg class="abs" style="left:1123.5px;top:437.5px" width="9" height="6" viewBox="0 0 9 6" fill="none" stroke="#408dfb" stroke-width="1.9"><path d="M1 1 L4 4 L7 1"/></svg>
<div class="abs" style="left:915px;top:541px;width:211.5px;height:150px;overflow:hidden">
  <div class="leg" style="top:0px"><i style="background:#2ec587"></i>Automobile Expense (44.62%)</div>
  <div class="leg" style="top:25.3px"><i style="background:#f77852"></i>IT and Internet Expenses (18.66%)</div>
  <div class="leg" style="top:50.6px"><i style="background:#4197fb"></i>Cost of Goods Sold (12.78%)</div>
  <div class="leg" style="top:75.9px"><i style="background:#fdba45"></i>Consultant Expense (9.76%)</div>
  <div class="leg" style="top:101.2px"><i style="background:#7874fb"></i>Office Supplies (5.79%)</div>
  <div class="leg" style="top:126.5px"><i style="background:#43cff2"></i>Others (8.39%)</div>
</div>

<div class="abs" style="left:0;top:811px;width:1188px;height:1px;background:#a8a8ad"></div>
</body></html>
